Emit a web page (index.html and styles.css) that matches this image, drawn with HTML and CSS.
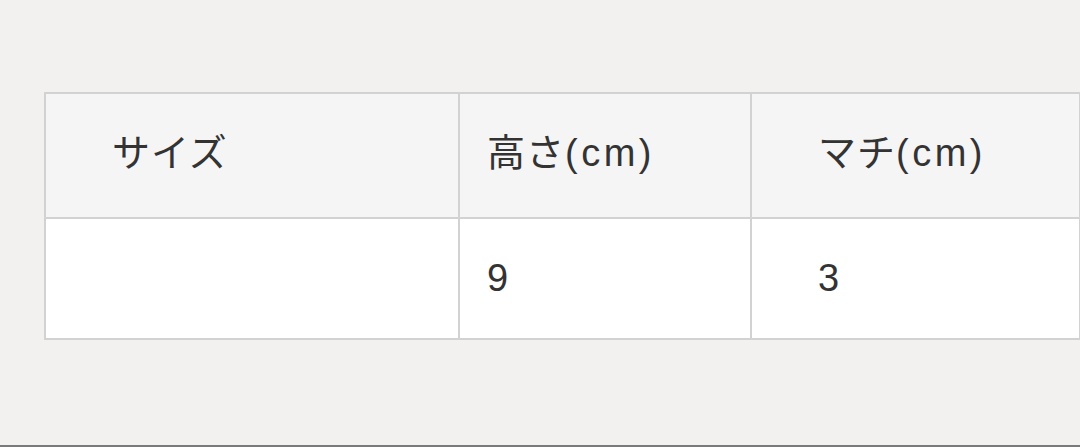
FILE: index.html
```html
<!DOCTYPE html>
<html lang="ja">
<head>
<meta charset="utf-8">
<link rel="stylesheet" href="styles.css">
</head>
<body>
<div class="page">
  <table class="spec">
    <colgroup>
      <col class="c1"><col class="c2"><col class="c3">
    </colgroup>
    <thead>
      <tr class="head">
        <th class="wide">サイズ</th>
        <th class="narrow">高さ<span class="unit">(cm)</span></th>
        <th class="wide">マチ<span class="unit">(cm)</span></th>
      </tr>
    </thead>
    <tbody>
      <tr class="body">
        <td class="wide"></td>
        <td class="narrow">9</td>
        <td class="wide">3</td>
      </tr>
    </tbody>
  </table>
  <div class="rule"></div>
</div>
</body>
</html>
```

FILE: styles.css
```css
html, body {
  margin: 0;
  padding: 0;
  background: #f2f1ef;
}
.page {
  height: 447px;
  display: flex;
  flex-direction: column;
  padding-top: 92px;
  box-sizing: border-box;
}
.spec {
  margin-left: 44px;
  width: 1035px;
  border-collapse: collapse;
  table-layout: fixed;
  font-family: "Liberation Sans", "Noto Sans CJK JP", sans-serif;
  font-size: 38px;
  letter-spacing: 1px;
  color: #333;
}
.unit { letter-spacing: 3.5px; }
.c1 { width: 414px; }
.c2 { width: 292px; }
.c3 { width: 329px; }
.spec th, .spec td {
  border: 2px solid #d2d2d2;
  text-align: left;
  font-weight: normal;
  vertical-align: middle;
  line-height: 1.2;
}
.head th {
  background: #f5f5f5;
  height: 119px;
  padding-top: 0;
  padding-bottom: 4px;
}
.body td {
  background: #ffffff;
  height: 119px;
  padding-top: 0;
  padding-bottom: 0;
}
.wide { padding-left: 66px; }
.narrow { padding-left: 27px; }
.rule {
  margin-top: auto;
  height: 2px;
  background: #7a7a7a;
}
```
